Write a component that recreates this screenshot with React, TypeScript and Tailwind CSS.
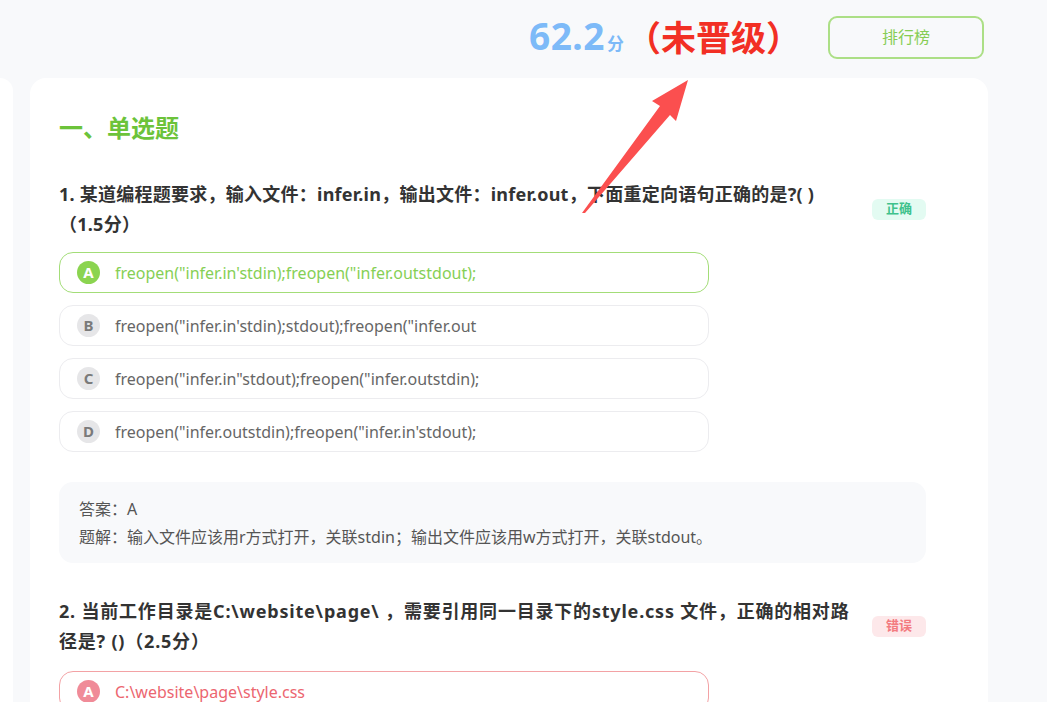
import React from "react";

type Opt = { k: string; t: string; s?: "ok" | "bad" };

function Option({ o }: { o: Opt }) {
  const border =
    o.s === "ok" ? "border-[#a3dd78]" : o.s === "bad" ? "border-[#f3a2a5]" : "border-[#ececef]";
  const circle =
    o.s === "ok"
      ? "bg-[#8bd450] text-white"
      : o.s === "bad"
      ? "bg-[#f08b98] text-white"
      : "bg-[#e6e6e8] text-[#7a7a7a]";
  const text = o.s === "ok" ? "text-[#86cf55]" : o.s === "bad" ? "text-[#ec6670]" : "text-[#666]";
  return (
    <div className={`flex items-center h-[41px] w-[650px] rounded-[14px] border ${border} bg-white pl-[17px]`}>
      <div className={`w-[23px] h-[23px] rounded-full flex items-center justify-center text-[15px] font-bold ${circle}`}>
        {o.k}
      </div>
      <div className={`ml-[15px] text-[16px] ${text}`}>{o.t}</div>
    </div>
  );
}

function Badge({ ok }: { ok: boolean }) {
  return (
    <div
      className={`shrink-0 w-[54px] h-[21px] rounded-[6px] flex items-center justify-center text-[13px] font-bold ${
        ok ? "bg-[#e3fbf2] text-[#3fc28c]" : "bg-[#fde8ea] text-[#f37b80]"
      }`}
    >
      {ok ? "正确" : "错误"}
    </div>
  );
}

export default function App() {
  const font = { fontFamily: '"Noto Sans", "Noto Sans CJK SC", sans-serif' };
  const q1: Opt[] = [
    { k: "A", t: 'freopen("infer.in\'stdin);freopen("infer.outstdout);', s: "ok" },
    { k: "B", t: 'freopen("infer.in\'stdin);stdout);freopen("infer.out' },
    { k: "C", t: 'freopen("infer.in"stdout);freopen("infer.outstdin);' },
    { k: "D", t: 'freopen("infer.outstdin);freopen("infer.in\'stdout);' },
  ];
  return (
    <div className="relative w-[1047px] h-[702px] overflow-hidden bg-[#f8f9fb]" style={font}>
      {/* header */}
      <div className="h-[78px] flex items-center pb-[4px]">
        <div className="ml-[529px] flex items-baseline text-[#7dbaf8] font-bold">
          <span className="text-[37px] leading-none tracking-[0.5px]">62.2</span>
          <span className="text-[17px] ml-[2px]">分</span>
        </div>
        <div className="ml-[2px] text-[#f22f24] font-bold text-[35px] leading-none">（未晋级）</div>
        <div className="ml-[27px] w-[156px] h-[43px] rounded-[9px] border-2 border-[#acdf86] flex items-center justify-center text-[#86cd55] text-[16px]">
          排行榜
        </div>
      </div>
      {/* body */}
      <div className="flex">
        <div className="w-[13px] h-[640px] bg-white rounded-tr-[14px]" />
        <div className="ml-[17px] w-[958px] h-[640px] bg-white rounded-t-[16px] pl-[29px] pt-[32px]">
          <div className="text-[24px] font-bold text-[#6cc33a] leading-[36px]">一、单选题</div>
          <div className="mt-[33px] flex items-center w-[867px]">
            <div className="w-[802px] text-[18px] font-bold text-[#333] leading-[30px] tracking-[0.25px]">
              1. 某道编程题要求，输入文件：infer.in，输出文件：infer.out，下面重定向语句正确的是?( )
              <br />
              （1.5分）
            </div>
            <div className="ml-auto">
              <Badge ok />
            </div>
          </div>
          <div className="mt-[13px] flex flex-col gap-[12px]">
            {q1.map((o) => (
              <Option key={o.k} o={o} />
            ))}
          </div>
          <div className="mt-[30px] w-[867px] h-[81px] rounded-[14px] bg-[#f8f9fb] px-[20px] pt-[13px] text-[16px] text-[#555] leading-[28px]">
            <div>答案：A</div>
            <div>题解：输入文件应该用r方式打开，关联stdin；输出文件应该用w方式打开，关联stdout。</div>
          </div>
          <div className="mt-[33px] flex items-center w-[867px]">
            <div className="w-[802px] text-[18px] font-bold text-[#333] leading-[30px] tracking-[0.8px]">
              2. 当前工作目录是C:\website\page\ ，需要引用同一目录下的style.css 文件，正确的相对路
              <br />
              径是? ()（2.5分）
            </div>
            <div className="ml-auto">
              <Badge ok={false} />
            </div>
          </div>
          <div className="mt-[15px]">
            <Option o={{ k: "A", t: "C:\\website\\page\\style.css", s: "bad" }} />
          </div>
        </div>
      </div>
      {/* annotation arrow */}
      <svg className="absolute left-0 top-0 pointer-events-none" width="1047" height="702">
        <path d="M582 213 L660 106 L652 101 L688 80 L676 121 L670 115 L585 213 Z" fill="#fb4f4f" />
      </svg>
    </div>
  );
}
